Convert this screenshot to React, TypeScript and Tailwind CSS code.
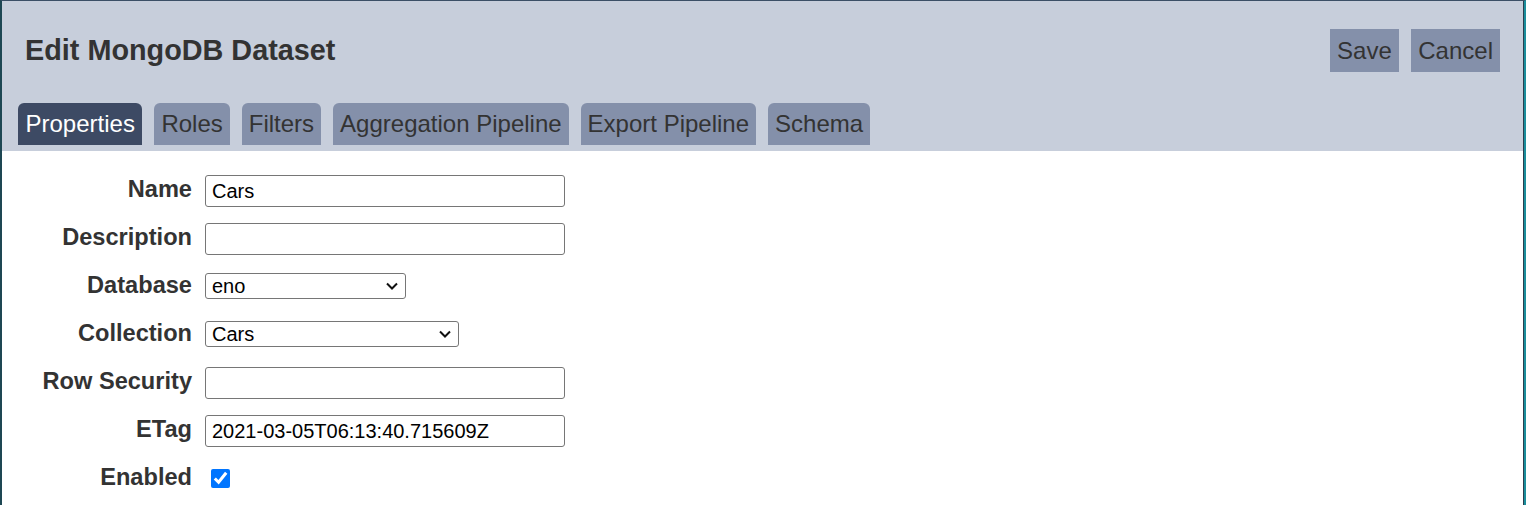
import React from "react";

const font = { fontFamily: '"Liberation Sans", Arial, sans-serif' };

function Chevron() {
  return (
    <svg
      width="12"
      height="8"
      viewBox="0 0 12 8"
      className="pointer-events-none absolute right-[8px] top-1/2 -translate-y-1/2"
    >
      <path d="M1 1.5 L6 6.5 L11 1.5" fill="none" stroke="#111" strokeWidth="2" />
    </svg>
  );
}

function Select({ value, width }: { value: string; width: string }) {
  return (
    <div className={`relative ${width} h-[26px] -translate-y-px`}>
      <select
        defaultValue={value}
        className="h-full w-full appearance-none rounded-[3px] border border-[#767676] bg-white pl-[6px] pr-6 text-[20px] leading-none text-black outline-none"
        style={font}
      >
        <option value={value}>{value}</option>
      </select>
      <Chevron />
    </div>
  );
}

function TextInput({ value }: { value: string }) {
  return (
    <input
      type="text"
      defaultValue={value}
      className="h-8 w-[360px] rounded-[3px] border border-[#767676] bg-white px-[6px] text-[20px] text-black outline-none"
      style={font}
    />
  );
}

const tabs = ["Properties", "Roles", "Filters", "Aggregation Pipeline", "Export Pipeline", "Schema"];

export default function App() {
  const rows: { label: string; field: React.ReactNode }[] = [
    { label: "Name", field: <TextInput value="Cars" /> },
    { label: "Description", field: <TextInput value="" /> },
    { label: "Database", field: <Select value="eno" width="w-[201px]" /> },
    { label: "Collection", field: <Select value="Cars" width="w-[254px]" /> },
    { label: "Row Security", field: <TextInput value="" /> },
    { label: "ETag", field: <TextInput value="2021-03-05T06:13:40.715609Z" /> },
    {
      label: "Enabled",
      field: (
        <input
          type="checkbox"
          defaultChecked
          className="ml-[6px] h-[19px] w-[19px] -translate-y-px accent-[#0075ff]"
        />
      ),
    },
  ];

  return (
    <div
      className="flex h-[505px] w-full overflow-hidden border-t border-l-2 border-r-2 border-t-[#3b4f66] border-l-[#1e4753] border-r-[#1b8e9c] bg-white"
      style={font}
    >
      <div className="flex flex-1 flex-col border-r border-[#2a3f4f]">
        <header className="flex flex-col bg-[#c7cedb] pb-[6px]">
          <div className="flex items-center justify-between pl-[23px] pr-[23px] pt-[28px]">
            <h1 className="text-[28.8px] font-bold leading-none text-[#333]">
              Edit MongoDB Dataset
            </h1>
            <div className="flex gap-3">
              <button className="h-[43px] bg-[#8490aa] px-[7.5px] text-[24px] text-[#333]">
                Save
              </button>
              <button className="h-[43px] bg-[#8490aa] px-[7px] text-[24px] text-[#333]">
                Cancel
              </button>
            </div>
          </div>
          <nav className="mt-[31px] flex gap-3 pl-4">
            {tabs.map((t, i) => (
              <div
                key={t}
                className={
                  i === 0
                    ? "flex h-[42px] items-center rounded-t-[6px] bg-[#3d4a64] px-[7.5px] text-[24px] text-white"
                    : "flex h-[42px] items-center rounded-t-[6px] bg-[#8490aa] px-[7px] text-[24px] text-[#333]"
                }
              >
                {t}
              </div>
            ))}
          </nav>
        </header>
        <main className="grid grid-cols-[190px_auto] content-start gap-x-[13px] gap-y-4 pt-6">
          {rows.map((r) => (
            <React.Fragment key={r.label}>
              <div className="flex h-8 -translate-y-px items-center justify-end text-[23.6px] font-bold text-[#333]">
                {r.label}
              </div>
              <div className="flex h-8 items-center">{r.field}</div>
            </React.Fragment>
          ))}
        </main>
      </div>
    </div>
  );
}
